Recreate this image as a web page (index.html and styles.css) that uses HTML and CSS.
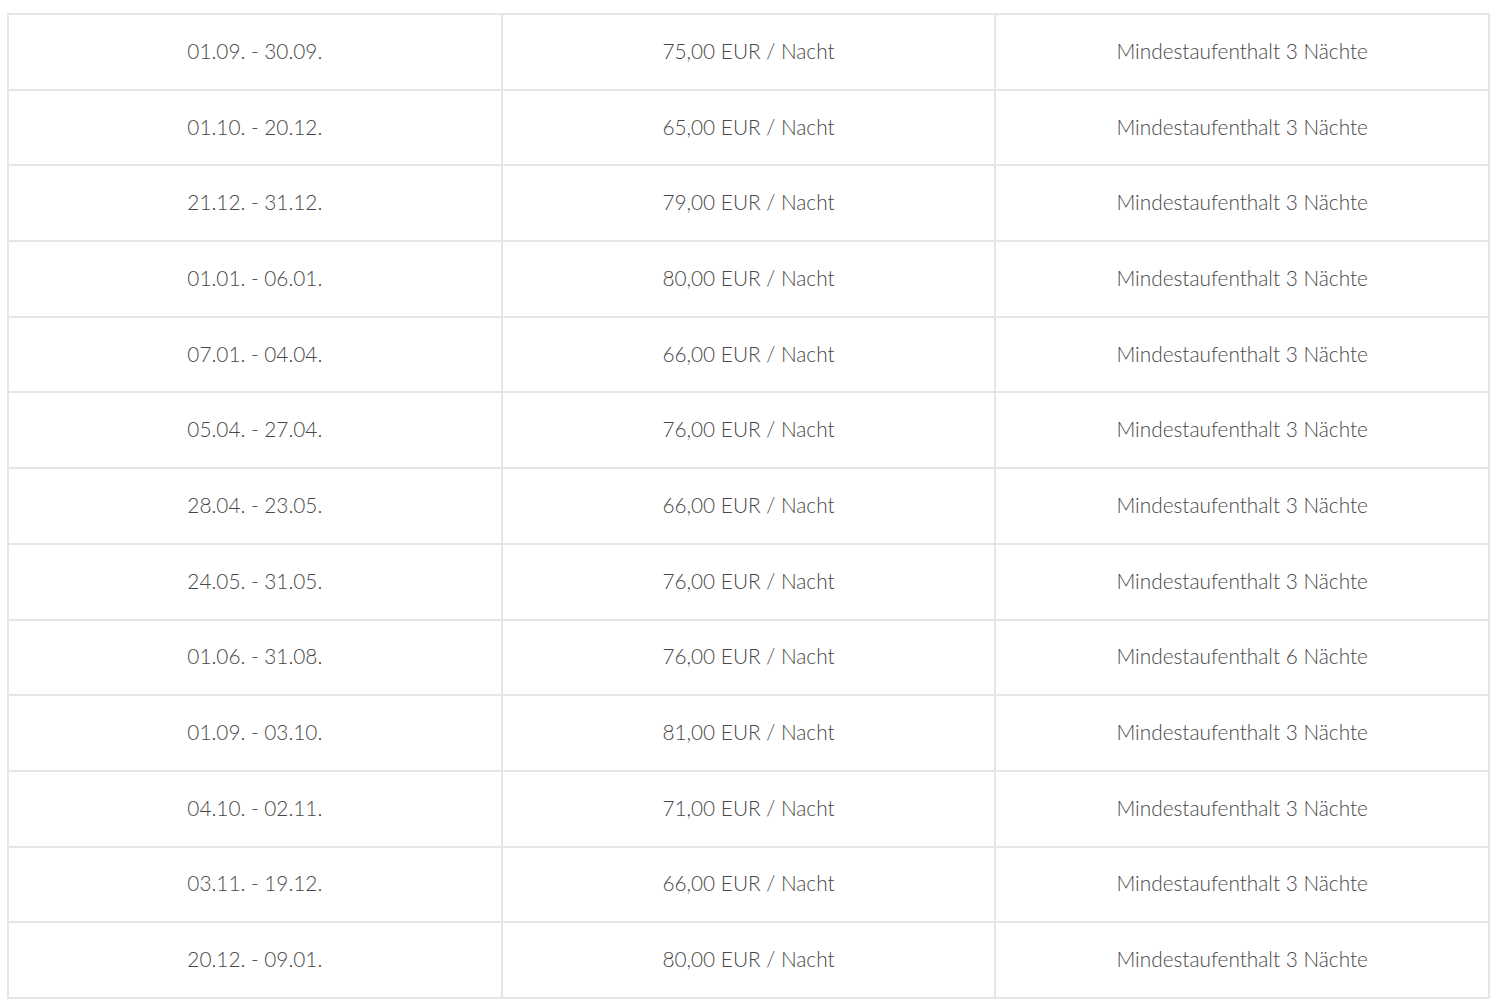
FILE: index.html
```html
<!DOCTYPE html>
<html lang="de">
<head>
<meta charset="utf-8">
<title>Preise</title>
<link rel="stylesheet" href="styles.css">
</head>
<body>
<div class="wrap">
<table class="prices">
<tbody>
<tr><td>01.09. - 30.09.</td><td>75,00 EUR / Nacht</td><td>Mindestaufenthalt 3 Nächte</td></tr>
<tr><td>01.10. - 20.12.</td><td>65,00 EUR / Nacht</td><td>Mindestaufenthalt 3 Nächte</td></tr>
<tr><td>21.12. - 31.12.</td><td>79,00 EUR / Nacht</td><td>Mindestaufenthalt 3 Nächte</td></tr>
<tr><td>01.01. - 06.01.</td><td>80,00 EUR / Nacht</td><td>Mindestaufenthalt 3 Nächte</td></tr>
<tr><td>07.01. - 04.04.</td><td>66,00 EUR / Nacht</td><td>Mindestaufenthalt 3 Nächte</td></tr>
<tr><td>05.04. - 27.04.</td><td>76,00 EUR / Nacht</td><td>Mindestaufenthalt 3 Nächte</td></tr>
<tr><td>28.04. - 23.05.</td><td>66,00 EUR / Nacht</td><td>Mindestaufenthalt 3 Nächte</td></tr>
<tr><td>24.05. - 31.05.</td><td>76,00 EUR / Nacht</td><td>Mindestaufenthalt 3 Nächte</td></tr>
<tr><td>01.06. - 31.08.</td><td>76,00 EUR / Nacht</td><td>Mindestaufenthalt 6 Nächte</td></tr>
<tr><td>01.09. - 03.10.</td><td>81,00 EUR / Nacht</td><td>Mindestaufenthalt 3 Nächte</td></tr>
<tr><td>04.10. - 02.11.</td><td>71,00 EUR / Nacht</td><td>Mindestaufenthalt 3 Nächte</td></tr>
<tr><td>03.11. - 19.12.</td><td>66,00 EUR / Nacht</td><td>Mindestaufenthalt 3 Nächte</td></tr>
<tr><td>20.12. - 09.01.</td><td>80,00 EUR / Nacht</td><td>Mindestaufenthalt 3 Nächte</td></tr>
</tbody>
</table>
</div>
</body>
</html>
```
FILE: styles.css
```css
html, body {
  margin: 0;
  padding: 0;
  background: #ffffff;
}
.wrap {
  padding: 13px 10px 0 7px;
}
.prices {
  width: 1483px;
  border-collapse: collapse;
  table-layout: fixed;
  font-family: Lato, "Liberation Sans", sans-serif;
  font-size: 20.8px;
  font-weight: 300;
  color: #474747;
}
.prices td {
  border: 2px solid #e6e6e6;
  text-align: center;
  vertical-align: middle;
  height: 70.7px;
  padding: 0 0 3px 0;
}
```
